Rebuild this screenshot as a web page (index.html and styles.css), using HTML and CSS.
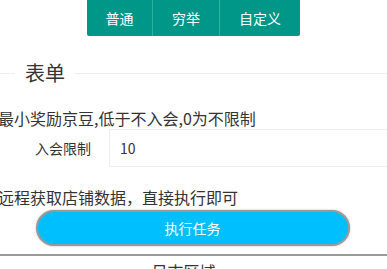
FILE: index.html
```html
<!DOCTYPE html>
<html lang="zh-CN">

<head>
    <meta charset="UTF-8">
    <meta name="viewport" content="width=device-width, initial-scale=1.0">
    <title>任务</title>
    <link rel="stylesheet" href="styles.css">
</head>

<body>
    <div class="tabs">
        <a class="tab" href="#">普通</a>
        <a class="tab" href="#">穷举</a>
        <a class="tab" href="#">自定义</a>
    </div>

    <fieldset class="field-title">
        <legend>表单</legend>
    </fieldset>

    <div class="content">
        <p class="tip">最小奖励京豆,低于不入会,0为不限制</p>
        <div class="form-item">
            <label class="form-label">入会限制</label>
            <input class="form-input" type="text" value="10">
        </div>
        <p class="tip">远程获取店铺数据，直接执行即可</p>
        <div class="btn-row">
            <button class="run-btn">执行任务</button>
        </div>
    </div>

    <hr class="divider">
    <div class="log-title">日志区域</div>
</body>

</html>
```

FILE: styles.css
```css
* {
    box-sizing: border-box;
    margin: 0;
    padding: 0;
}

body {
    font-family: "Noto Sans CJK SC", "Noto Sans", sans-serif;
    color: #333;
    background: #fff;
    width: 387px;
    height: 269px;
    overflow: hidden;
}

.tabs {
    display: flex;
    justify-content: center;
}

.tab {
    display: block;
    width: 67px;
    height: 36px;
    line-height: 36px;
    text-align: center;
    background-color: #009688;
    color: #fff;
    font-size: 14px;
    text-decoration: none;
    border-right: 1px solid rgba(255, 255, 255, 0.2);
}

.tab:first-child {
    width: 66px;
    border-bottom-left-radius: 2px;
}

.tab:last-child {
    width: 80px;
    border-right: none;
    border-bottom-right-radius: 2px;
}

.field-title {
    margin-top: 25px;
    border: none;
    border-top: 1px solid #eee;
    padding: 0 0 0 15px;
}

.field-title legend {
    padding: 0 10px;
    font-size: 20px;
    line-height: 24px;
    color: #333;
}

.content {
    margin-left: -2px;
}

.tip {
    font-size: 16px;
    line-height: 22px;
    color: #333;
}

.content > .tip:first-child {
    margin-top: 22px;
}

.form-item {
    display: flex;
    align-items: center;
    margin-bottom: 19px;
}

.form-label {
    width: 111px;
    padding-right: 18px;
    text-align: right;
    font-size: 14px;
    color: #333;
}

.form-input {
    flex: 1;
    height: 38px;
    margin-right: -20px;
    padding-left: 10px;
    border: 1px solid #eee;
    border-radius: 2px;
    font-family: "Noto Sans CJK SC", "Noto Sans", sans-serif;
    font-size: 14px;
    color: #333;
    outline: none;
}

.btn-row {
    display: flex;
    justify-content: center;
    margin-top: 2px;
}

.run-btn {
    width: 314px;
    height: 36px;
    border: 2px solid #999;
    border-radius: 18px;
    background-color: #00bfff;
    color: #fff;
    font-family: "Noto Sans CJK SC", "Noto Sans", sans-serif;
    font-size: 14px;
    box-shadow: 0 0 2px rgba(0, 0, 0, 0.3);
}

.divider {
    margin-top: 8px;
    border: none;
    border-top: 2px solid #999;
}

.log-title {
    text-align: center;
    font-size: 16px;
    line-height: 22px;
    margin-top: 4px;
    margin-right: 20px;
}
```
